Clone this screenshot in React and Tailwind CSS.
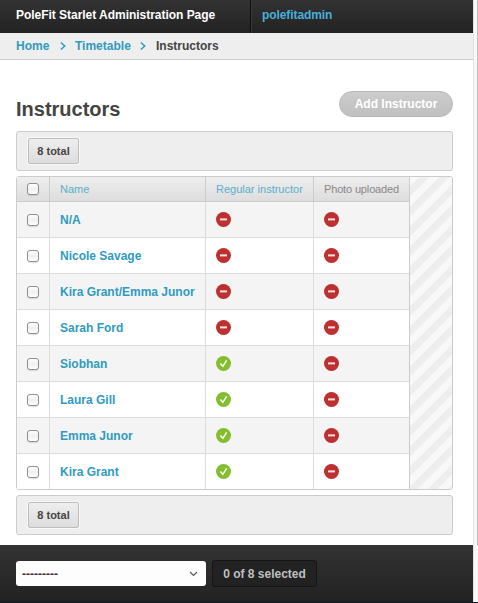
const rows = [
  ['N/A', false],
  ['Nicole Savage', false],
  ['Kira Grant/Emma Junor', false],
  ['Sarah Ford', false],
  ['Siobhan', true],
  ['Laura Gill', true],
  ['Emma Junor', true],
  ['Kira Grant', true],
];

function StatusIcon({ ok }) {
  return (
    <svg width="15" height="15" viewBox="0 0 15 15" className="block">
      <circle cx="7.5" cy="7.5" r="7.5" fill={ok ? '#83be2e' : '#be2f2f'} />
      {ok ? (
        <path d="M4.4 7.4 6.9 10.3 10.6 4.3" fill="none" stroke="#fff" strokeWidth="1.5" />
      ) : (
        <rect x="4" y="6.4" width="7" height="2" fill="#f8e4e4" />
      )}
    </svg>
  );
}

function Checkbox() {
  return (
    <span
      role="checkbox"
      aria-checked="false"
      className="block h-3 w-3 rounded-[3px] border border-[#8f8f8f] bg-linear-to-b from-white via-[#f0f0f0] to-white shadow-[0_1px_1px_rgba(0,0,0,0.12)]"
    />
  );
}

function TotalBar() {
  return (
    <div className="flex h-10 items-center rounded-[3px] border border-[#ccc] bg-[#eee] pl-[11px]">
      <div className="flex h-[26px] w-[51px] items-center justify-center rounded-[2px] border border-[#bdbdbd] bg-linear-to-b from-[#eee] to-[#ddd] text-[11px] font-bold text-[#444] shadow-[0_0_0_1px_#f8f8f8]">
        8 total
      </div>
    </div>
  );
}

function Chevron() {
  return (
    <svg width="6" height="8" viewBox="0 0 6 8">
      <path d="M.9 .5 4.7 4 .9 7.5" fill="none" stroke="#309bbf" strokeWidth="1.5" />
    </svg>
  );
}

export default function App() {
  return (
    <div className="flex h-[603px] w-[478px] flex-col overflow-hidden bg-white font-['Liberation_Sans',Arial,sans-serif] text-xs text-[#444]">
      <div className="flex h-[602px]">
        <div className="flex w-[473px] flex-col">
          <header className="flex h-[33px] bg-linear-to-b from-[#333] to-[#222] font-bold leading-[30px]">
            <div className="w-[251px] border-r border-[#0c0c0c] pl-4 text-white">
              <span className="whitespace-nowrap tracking-[-0.03px]">PoleFit Starlet Administration Page</span>
            </div>
            <div className="border-l border-[#3a3a3a] pl-[10px] tracking-[-0.08px] text-[#48afdb]">polefitadmin</div>
          </header>
          <nav className="flex h-[27px] items-center border-b border-[#ccc] bg-[#eee] pl-4 font-bold text-[#309bbf]">
            <span className="w-[44px]">Home</span>
            <Chevron />
            <span className="ml-[9px] w-[65px]">Timetable</span>
            <Chevron />
            <span className="ml-[10px] text-[#444]">Instructors</span>
          </nav>
          <main className="flex h-[485px] flex-col px-4 pr-5">
            <div className="flex h-[71px] justify-between pt-[31px]">
              <h1 className="mt-[6px] text-xl font-bold leading-6 text-[#444]">Instructors</h1>
              <button className="h-[26px] w-[114px] rounded-full border border-[#b8b8b8] bg-linear-to-b from-[#ccc] to-[#c0c0c0] font-bold leading-6 text-white">
                Add Instructor
              </button>
            </div>
            <TotalBar />
            <div className="mt-[5px] mb-[5px] flex h-[314px] overflow-hidden rounded-[3px] border border-[#ccc] bg-[#f8f8f8]">
              <div className="w-[393px] border-r border-[#ccc] bg-white">
                <div className="grid h-[25px] grid-cols-[33px_156px_108px_95px] border-b border-[#ccc] bg-linear-to-b from-[#eee] to-[#ddd] text-[11px] leading-6 text-[#59afcc]">
                  <div className="flex items-center border-r border-[#ccc] pl-[10px]"><Checkbox /></div>
                  <div className="border-r border-[#ccc] pl-[10px]">Name</div>
                  <div className="border-r border-[#ccc] pl-[10px]"><span className="whitespace-nowrap">Regular instructor</span></div>
                  <div className="pl-[10px] text-[#888]"><span className="whitespace-nowrap tracking-[-0.15px]">Photo uploaded</span></div>
                </div>
                {rows.map(([name, regular]) => (
                  <div key={name} className="grid h-9 grid-cols-[33px_156px_108px_95px] border-b border-[#ddd] last:h-[35px] last:border-b-0 odd:bg-white even:bg-[#f4f4f4]">
                    <div className="flex items-center border-r border-[#ddd] pt-px pl-[10px]"><Checkbox /></div>
                    <div className="border-r border-[#ddd] pt-px pl-[10px] font-bold leading-[34px] text-[#309bbf]"><span className="whitespace-nowrap">{name}</span></div>
                    <div className="flex items-center border-r border-[#ddd] pl-[10px]"><StatusIcon ok={regular} /></div>
                    <div className="flex items-center pl-[10px]"><StatusIcon ok={false} /></div>
                  </div>
                ))}
              </div>
              <div className="flex-1 bg-[repeating-linear-gradient(135deg,#f8f8f8_0px,#f8f8f8_7.07px,#eee_7.07px,#eee_14.14px)]" />
            </div>
            <TotalBar />
          </main>
          <footer className="flex h-[57px] items-center bg-linear-to-b from-[#333] to-[#222] pl-4">
            <div className="flex h-[25px] w-[190px] items-center justify-between rounded-[3px] bg-[#fdfdfd] pr-2 pl-[6px] text-[#4a2a38]">
              <span className="font-bold">---------</span>
              <svg width="9" height="6" viewBox="0 0 9 6">
                <path d="M1 1 4.5 4.5 8 1" fill="none" stroke="#555" strokeWidth="1.2" />
              </svg>
            </div>
            <div className="ml-[6px] flex h-[27px] w-[105px] items-center justify-center rounded-[3px] border border-[#151515] bg-[#222] font-bold whitespace-nowrap text-[#bfbfbf]">
              0 of 8 selected
            </div>
          </footer>
        </div>
        <div className="w-[5px] border-l border-[#e2e2e2] bg-[#f8f8f8]">
          <div className="ml-[3px] h-[545px] w-px rounded-t bg-[#bbb]" />
        </div>
      </div>
      <div className="h-px bg-[#0b1c2e]" />
    </div>
  );
}
